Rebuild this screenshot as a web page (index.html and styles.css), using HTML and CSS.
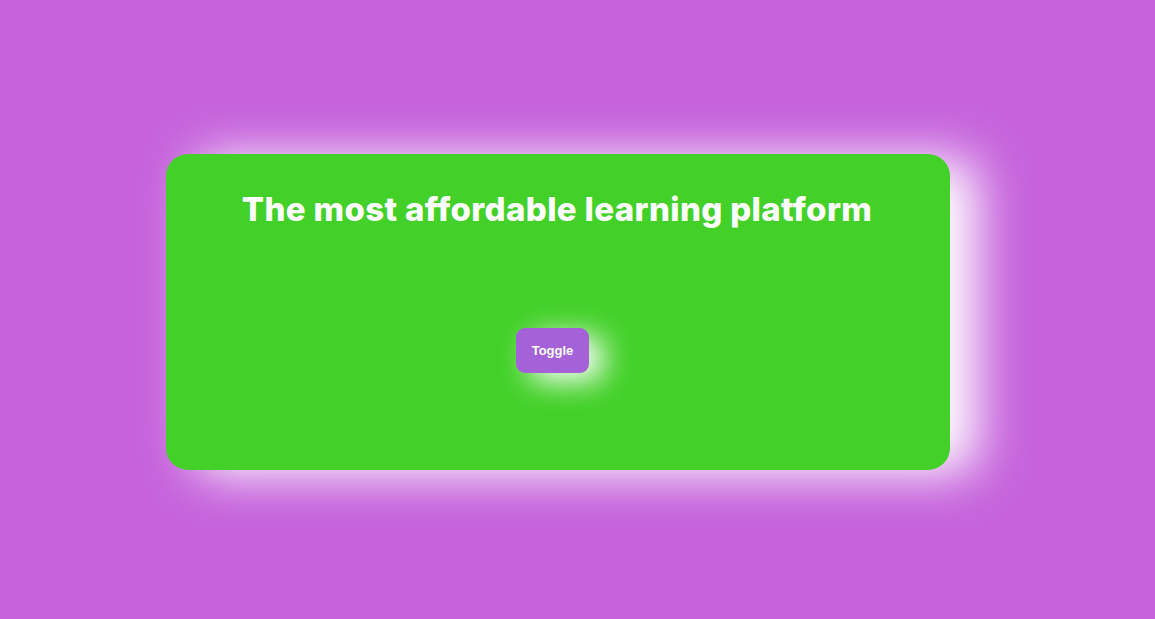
FILE: index.html
```html
<!DOCTYPE html>
<html>
<head>
<meta charset="utf-8">
<link rel="stylesheet" href="styles.css">
</head>
<body>
<div class="page">
  <div class="card">
    <h1 class="title">The most affordable learning platform</h1>
    <button class="toggle">Toggle</button>
  </div>
</div>
</body>
</html>
```
FILE: styles.css
```css
html, body {
  margin: 0;
  padding: 0;
  background: #c663dc;
  height: 100%;
}
.page {
  padding: 154px 0 0 166px;
}
.card {
  width: 784px;
  height: 316px;
  box-sizing: border-box;
  background: #43d129;
  border-radius: 22px;
  box-shadow: 28px 4px 50px #ffffff;
  display: flex;
  flex-direction: column;
  align-items: center;
  padding-top: 35px;
}
.title {
  margin: 0;
  margin-left: -2px;
  font-family: Inter, "Open Sans", sans-serif;
  font-weight: 800;
  font-size: 33px;
  line-height: 40px;
  color: #ffffff;
  letter-spacing: 0.35px;
}
.toggle {
  margin-top: 99px;
  margin-right: 11px;
  width: 73px;
  height: 45px;
  border: none;
  border-radius: 9px;
  background: #a461d8;
  color: #ffffff;
  font-family: "Liberation Sans", Arial, sans-serif;
  font-weight: 700;
  font-size: 13px;
  box-shadow: 14px 8px 30px #ffffff;
  padding: 0;
}
```
